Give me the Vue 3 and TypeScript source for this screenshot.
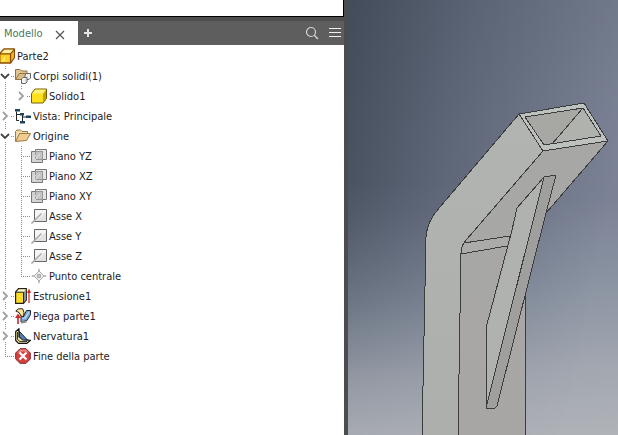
<script setup lang="ts">
import { computed, ref } from 'vue'

interface TreeNode {
  id: string
  label: string
  icon: string
  children?: TreeNode[]
}

interface Row {
  node: TreeNode
  level: number
  last: boolean
  trunk: boolean
}

const part: TreeNode = { id: 'parte', label: 'Parte2', icon: 'cube-part' }

const features: TreeNode[] = [
  {
    id: 'corpi',
    label: 'Corpi solidi(1)',
    icon: 'bodies',
    children: [{ id: 'solido', label: 'Solido1', icon: 'cube', children: [] }],
  },
  { id: 'vista', label: 'Vista: Principale', icon: 'view', children: [] },
  {
    id: 'origine',
    label: 'Origine',
    icon: 'folder',
    children: [
      { id: 'yz', label: 'Piano YZ', icon: 'plane' },
      { id: 'xz', label: 'Piano XZ', icon: 'plane' },
      { id: 'xy', label: 'Piano XY', icon: 'plane' },
      { id: 'x', label: 'Asse X', icon: 'axis' },
      { id: 'y', label: 'Asse Y', icon: 'axis' },
      { id: 'z', label: 'Asse Z', icon: 'axis' },
      { id: 'centro', label: 'Punto centrale', icon: 'point' },
    ],
  },
  { id: 'estrusione', label: 'Estrusione1', icon: 'extrude', children: [] },
  { id: 'piega', label: 'Piega parte1', icon: 'bend', children: [] },
  { id: 'nervatura', label: 'Nervatura1', icon: 'rib', children: [] },
  { id: 'fine', label: 'Fine della parte', icon: 'end' },
]

const open = ref<Set<string>>(new Set(['corpi', 'origine']))

function toggle(id: string) {
  const next = new Set(open.value)
  if (next.has(id)) next.delete(id)
  else next.add(id)
  open.value = next
}

const rows = computed<Row[]>(() => {
  const out: Row[] = [{ node: part, level: 0, last: true, trunk: false }]
  features.forEach((node, i) => {
    const last = i === features.length - 1
    out.push({ node, level: 1, last, trunk: false })
    if (!node.children || !open.value.has(node.id)) return
    const kids = node.children
    kids.forEach((kid, k) => {
      out.push({ node: kid, level: 2, last: k === kids.length - 1, trunk: !last })
    })
  })
  return out
})
</script>

<template>
  <svg class="sprite" aria-hidden="true">
    <defs>
      <symbol id="cube-part" viewBox="0 0 16 16">
        <path d="M.7 5.500 5 1h10.300v8.500L11.500 15H.7z" fill="#ffd21f" stroke="#8a4a08" stroke-width="1.400" stroke-linejoin="round" />
        <path d="M2 5.500 5.500 1.800h9L11 5.500z" fill="#fff0a0" />
        <path d="M11.500 6.500 15 2.500v7l-3.500 4.500z" fill="#f0b020" />
        <path d="M.7 5.800h10.800V15M11.500 5.800l4-4.500" fill="none" stroke="#8a4a08" stroke-width="1.200" />
        <path d="M2 13.500 6 8v5.500z" fill="#ffe873" />
      </symbol>
      <symbol id="cube" viewBox="0 0 16 16">
        <path d="M.5 5.500 4 1h11.500v9.500L12 15H.5z" fill="#ffe01c" stroke="#72600c" stroke-linejoin="round" />
        <path d="M1.500 5.500 4.500 1.700h10L11.500 5.500z" fill="#fff27c" />
        <path d="M12 6l3-3.800v8L12 14z" fill="#c99c08" />
      </symbol>
      <symbol id="bodies" viewBox="0 0 16 16">
        <path d="M.5 11.500v-10H5L6.500 3H12v3" fill="#e0c594" stroke="#92723e" />
        <path d="M.5 11.500 4.500 5.500H15l-3 6z" fill="#d9bd88" stroke="#92723e" />
        <path d="M10 7 11.500 5.500h4V10L14 11.500h-4z" fill="#eee" stroke="#666" />
        <path d="M6.500 11 8 9.500h4V14L10.500 15.500h-4z" fill="#f4f4f4" stroke="#666" />
        <path d="M10.500 11v4l1-1v-4z" fill="#aaa" />
      </symbol>
      <symbol id="folder" viewBox="0 0 16 16">
        <path d="M.5 13.500V3.500L2 2h3.500L7 3.500h5.500v2" fill="#f2dba9" stroke="#9c7b45" />
        <path d="M.7 13.500 4.500 5.500h11l-4 7z" fill="#f0cc8d" stroke="#9c7b45" stroke-linejoin="round" />
      </symbol>
      <symbol id="view" viewBox="0 0 16 16">
        <path d="M1.500 3.500v9H4M1.500 6.500H5M7.500 7v7H9M7.500 9H11" fill="none" stroke="#222" />
        <path d="M0 1h5v2.500H0zM5 5h4v2.500H5zM11 7.500h5V10h-5zM5 13h5v2.500H5z" fill="#1c4560" />
      </symbol>
      <symbol id="plane" viewBox="0 0 16 16">
        <path d="M4.500 1.500h11v10h-11z" fill="#e6e6e6" stroke="#777" />
        <path d="M.5 3.500h11v11H.5z" fill="#d2d2d2" stroke="#777" />
        <path d="M4.500 3.500h7v8h-7z" fill="#c4c4c4" stroke="#999" />
        <path d="M2 11 5 7M3 13l6-7" stroke="#e8e8e8" />
      </symbol>
      <symbol id="axis" viewBox="0 0 16 16">
        <path d="M3.500 1.500h12v12h-12z" fill="#f6f6f6" stroke="#666" />
        <path d="M5 13h10V4z" fill="#e2e2e2" />
        <path d="M.5 15.500 10.500 5.500" stroke="#aaa" stroke-width="1.600" />
      </symbol>
      <symbol id="point" viewBox="0 0 16 16">
        <path d="M8 3 13 8l-5 5-5-5z" fill="#f2f2f2" stroke="#aaa" />
        <path d="M8 .8V4M8 12v3.200M.8 8H4M12 8h3.200" stroke="#aaa" stroke-width="1.400" />
        <circle cx="8" cy="8" r="2.300" fill="#aaa" />
        <circle cx="8" cy="8" r=".8" fill="#eee" />
      </symbol>
      <symbol id="extrude" viewBox="0 0 16 16">
        <path d="M.6 4 3.500.7h7.800V12L8.500 15.300H.6z" fill="#ffdc28" stroke="#222" stroke-width="1.200" />
        <path d="M1.500 4 4 1.400h6.500L8.300 4z" fill="#f6f6ed" />
        <path d="M8.500 4.500 10.800 2v9.700l-2.300 2.800z" fill="#7d94a8" />
        <path d="M.6 4.200h7.900v11" fill="none" stroke="#222" />
        <path d="M14 15V3" stroke="#d03430" stroke-width="1.300" />
        <path d="M14 .5 16 5h-4z" fill="#d02824" />
      </symbol>
      <symbol id="bend" viewBox="0 0 16 16">
        <path d="M6 8 9 7.500 11.500 2.500h4V6.500L12 12.500l-6 1.500z" fill="#7fa6d6" stroke="#1f2a3c" stroke-linejoin="round" />
        <path d="M.8 3 3.500.8h4.200L9 4.500 8.500 9 6 8 4 4.500z" fill="#ffe68a" stroke="#222" stroke-linejoin="round" />
        <path d="M7.500 10.500 10.500 9.500 14 4" fill="none" stroke="#c9dcf2" stroke-width="1.200" />
        <path d="M6 14.500 11.500 13.500" stroke="#888" stroke-width="2" />
        <path d="M3 16V9" stroke="#c92b27" stroke-width="1.600" />
        <path d="M3 5.500 6 10H0z" fill="#d32924" />
      </symbol>
      <symbol id="rib" viewBox="0 0 16 16">
        <path d="M.7 3.500 4 .7v8L8 11.500l7.500.8L12 15.300H3.500L.7 12.500z" fill="#f2e6a2" stroke="#111" stroke-width="1.200" stroke-linejoin="round" />
        <path d="M4.500 3.500 12.500 12 7.500 12 4.500 9z" fill="#5b7fae" stroke="#17263c" />
        <path d="M2.500 4v7.500l2.500 2h7" fill="none" stroke="#333" />
      </symbol>
      <symbol id="end" viewBox="0 0 16 16">
        <path d="M5 .7h6L15.300 5v6L11 15.300H5L.7 11V5z" fill="#d6403f" stroke="#7c2828" />
        <path d="M5.200 1.500h5.600L14 4.800C10 3 6 3 2 5z" fill="#e88783" />
        <path d="m4.500 4.500 7 7m0-7-7 7" stroke="#fff" stroke-width="2.200" />
      </symbol>
    </defs>
  </svg>

  <div class="app">
    <aside class="browser">
      <div class="dock"></div>
      <header class="tabs">
        <div class="tab">
          <span>Modello</span>
          <button type="button" class="icon-button" aria-label="Chiudi">
            <svg width="10" height="10" viewBox="0 0 10 10"><path d="m1 1 8 8m0-8-8 8" stroke="#555" stroke-width="1.200" /></svg>
          </button>
        </div>
        <button type="button" class="icon-button add" aria-label="Aggiungi">
          <svg width="10" height="10" viewBox="0 0 10 10"><path d="M5 1v8M1 5h8" stroke="#e6e6e6" stroke-width="2" /></svg>
        </button>
        <div class="tools">
          <button type="button" class="icon-button" aria-label="Cerca">
            <svg width="14" height="14" viewBox="0 0 14 14" fill="none" stroke="#d4d4d4">
              <circle cx="6" cy="6" r="4.500" stroke-width="1.200" />
              <path d="m9.300 9.300 3.700 3.700" stroke-width="1.400" />
            </svg>
          </button>
          <button type="button" class="icon-button" aria-label="Menu">
            <svg width="12" height="10" viewBox="0 0 12 10"><path d="M0 .5h12M0 4.500h12M0 8.500h12" stroke="#f0f0f0" /></svg>
          </button>
        </div>
      </header>

      <ul class="tree">
        <li v-for="row in rows" :key="row.node.id" class="row">
          <span v-if="row.level === 2" class="slot" :class="{ trunk: row.trunk }"></span>
          <span v-if="row.level > 0" class="slot branch" :class="row.last ? 'half' : 'trunk'">
            <button
              v-if="row.node.children"
              type="button"
              class="toggle"
              :aria-expanded="open.has(row.node.id)"
              :aria-label="row.node.label"
              @click="toggle(row.node.id)"
            >
              <svg v-if="open.has(row.node.id)" width="10" height="10" viewBox="0 0 10 10">
                <path d="m1 3 4 4 4-4" fill="none" stroke="#444" stroke-width="1.800" />
              </svg>
              <svg v-else width="10" height="10" viewBox="0 0 10 10">
                <path d="m3 1 4 4-4 4" fill="none" stroke="#a0a0a0" stroke-width="1.800" />
              </svg>
            </button>
          </span>
          <svg class="icon" width="16" height="16"><use :href="'#' + row.node.icon" /></svg>
          <span class="label">{{ row.node.label }}</span>
        </li>
      </ul>
    </aside>

    <div class="splitter"></div>

    <main class="viewport">
      <svg class="model" viewBox="0 0 270 435" preserveAspectRatio="xMinYMin slice" role="img" aria-label="Parte2">
        <defs>
          <linearGradient id="side" x1="0" y1="0" x2="0" y2="1">
            <stop offset="0" stop-color="#b2b4b2" />
            <stop offset="1" stop-color="#adafad" />
          </linearGradient>
          <linearGradient id="front" x1="0" y1="0" x2="0" y2="1">
            <stop offset="0" stop-color="#a7a8a5" />
            <stop offset="1" stop-color="#a8a6a5" />
          </linearGradient>
        </defs>
        <path d="M195 151 260 141 198 213 177 295V436H110L113 253Q114 245 119 239z" fill="url(#front)" />
        <path d="M171 114 195 151 119 239Q113 245 113 253L110 436H74L78 237Q79 221 92 207z" fill="url(#side)" />
        <path d="M116 243 162 236 159 246 113 254z" fill="#abacaa" />
        <path d="M171 114 236 103 260 141 195 151z" fill="#bec2bf" />
        <path d="M177 117 235 108 253 136 196 145z" fill="#a7a8a4" />
        <path d="M235 108 253 136 204 144z" fill="#b0b2ae" />
        <path d="M196 177 169 208 165 231 139 328V408z" fill="#b0b2b0" />
        <path d="M196 177 208 175 198 213 149 407 138 408z" fill="#9fa09e" />
        <g class="edges">
          <path d="M74 436 78 237Q79 221 92 207L171 114 236 103 260 141 198 213" />
          <path d="M171 114 195 151 260 141M195 151 119 239Q113 245 113 253L110 436" />
          <path d="M177 117 235 108 253 136 196 145zM235 108 204 144" />
          <path d="M116 243 162 236M113 254 159 246" />
          <path d="M138 408V328L164 230 169 208 196 177 208 175 198 213 149 406 147 408H138L196 177" />
          <path d="M177 295V436" />
        </g>
      </svg>
    </main>
  </div>
</template>

<style>
body {
  margin: 0;
}
</style>

<style scoped>
.sprite {
  position: absolute;
  width: 0;
  height: 0;
}

.app {
  display: grid;
  grid-template-columns: minmax(0, 344fr) 4px minmax(0, 270fr);
  height: 100vh;
  overflow: hidden;
  background: #fff;
  color: #1c1c24;
  font-family: Tahoma, "DejaVu Sans Condensed", "Noto Sans", sans-serif;
  font-size: 11px;
}

.browser {
  display: flex;
  flex-direction: column;
  min-width: 0;
}

.dock {
  box-sizing: border-box;
  height: 17px;
  flex: none;
  border-right: 1px solid #000;
  border-bottom: 1px solid #000;
}

.tabs {
  display: flex;
  align-items: stretch;
  height: 24px;
  flex: none;
  border-top: 4px solid #4d4d4d;
  background: #5e5e5e;
}

.tab {
  display: flex;
  align-items: center;
  gap: 12px;
  padding: 0 13px 0 4px;
  background: #fff;
  color: #4a7860;
}

.icon-button,
.toggle {
  display: flex;
  align-items: center;
  justify-content: center;
  padding: 0;
  border: 0;
  background: none;
}

.tab .icon-button {
  padding-top: 3px;
}

.add {
  padding: 0 5px;
}

.tools {
  display: flex;
  gap: 10px;
  margin-left: auto;
  padding-right: 3px;
}

.tree {
  margin: 0;
  padding: 1px 0 0;
  list-style: none;
}

.row {
  display: flex;
  align-items: center;
  height: 20px;
  margin-left: -1px;
}

.slot {
  display: flex;
  align-items: center;
  width: 16px;
  height: 20px;
  flex: none;
  background-repeat: no-repeat;
}

.trunk,
.half {
  --down: repeating-linear-gradient(180deg, #8c8c8c 0 1px, transparent 1px 2px);
  background-image: var(--down);
  background-position: 6px 0;
  background-size: 1px 20px;
}

.half {
  background-size: 1px 10px;
}

.branch {
  background-image: var(--down), repeating-linear-gradient(90deg, #8c8c8c 0 1px, transparent 1px 2px);
  background-position: 6px 0, 6px 10px;
  background-size: 1px 20px, 9px 1px;
}

.branch.half {
  background-size: 1px 10px, 9px 1px;
}

.toggle {
  width: 12px;
  height: 12px;
  background: #fff;
}

.icon {
  flex: none;
}

.label {
  padding-left: 2px;
  white-space: nowrap;
}

.splitter {
  background: #4c4c4c;
}

.viewport {
  display: grid;
  min-width: 0;
  overflow: hidden;
  background: linear-gradient(175deg, #737b8c 0%, #7b8295 30%, #7b8295 48%, #8992a1 65%, #a2a7b0 85%, #b0b3b8 100%);
}

/* Dark haze along the left side that clears towards the floor. */
.viewport::before {
  content: "";
  grid-area: 1 / 1;
  background: linear-gradient(100deg, rgb(62 71 84 / 90%) 0%, rgb(72 81 98 / 55%) 38%, rgb(90 98 114 / 0%) 85%);
  mask-image: linear-gradient(180deg, #000 0%, #000 42%, rgb(0 0 0 / 55%) 68%, rgb(0 0 0 / 20%) 86%, rgb(0 0 0 / 5%) 100%);
}

.model {
  z-index: 1;
  grid-area: 1 / 1;
  display: block;
  width: 100%;
  height: 100vh;
}

.edges {
  fill: none;
  stroke: #3c3c3c;
  stroke-width: 1;
  stroke-linejoin: round;
  shape-rendering: crispEdges;
}
</style>
